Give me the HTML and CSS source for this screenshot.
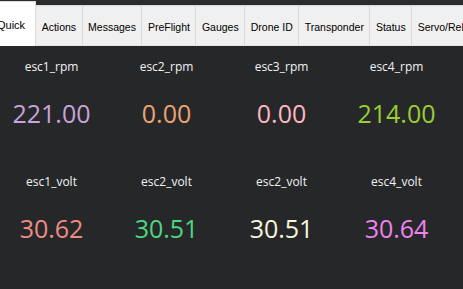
FILE: index.html
```html
<!DOCTYPE html>
<html lang="en">
<head>
    <meta charset="UTF-8">
    <title>Quick</title>
    <link rel="stylesheet" href="styles.css">
</head>
<body>

<div class="tabs">
    <div class="tab active">Quick</div>
    <div class="tab">Actions</div>
    <div class="tab">Messages</div>
    <div class="tab">PreFlight</div>
    <div class="tab">Gauges</div>
    <div class="tab">Drone ID</div>
    <div class="tab">Transponder</div>
    <div class="tab">Status</div>
    <div class="tab">Servo/Relay</div>
</div>

<div class="quick">
    <div class="cell">
        <div class="label">esc1_rpm</div>
        <div class="value c-thistle">221.00</div>
    </div>
    <div class="cell">
        <div class="label">esc2_rpm</div>
        <div class="value c-sandy">0.00</div>
    </div>
    <div class="cell">
        <div class="label">esc3_rpm</div>
        <div class="value c-pink">0.00</div>
    </div>
    <div class="cell">
        <div class="label">esc4_rpm</div>
        <div class="value c-yellowgreen">214.00</div>
    </div>
    <div class="cell">
        <div class="label">esc1_volt</div>
        <div class="value c-salmon">30.62</div>
    </div>
    <div class="cell">
        <div class="label">esc2_volt</div>
        <div class="value c-green">30.51</div>
    </div>
    <div class="cell">
        <div class="label">esc2_volt</div>
        <div class="value c-beige">30.51</div>
    </div>
    <div class="cell">
        <div class="label">esc4_volt</div>
        <div class="value c-violet">30.64</div>
    </div>
</div>

</body>
</html>
```

FILE: styles.css
```css
body {
    margin: 0;
    padding: 0;
    width: 463px;
    height: 289px;
    overflow: hidden;
    background: #262729;
    font-family: 'Open Sans', sans-serif;
}
.tabs {
    display: flex;
    align-items: flex-start;
    height: 46px;
    margin-left: -9px;
    background: #2b2c2e;
    border-bottom: 1px solid #e3e3e3;
    box-sizing: border-box;
    white-space: nowrap;
    font-family: 'Liberation Sans', Arial, sans-serif;
    font-size: 10.5px;
    color: #000;
}
.tab {
    flex: none;
    margin-top: 5px;
    height: 40px;
    line-height: 42px;
    padding: 0 5.5px;
    background: #f0f0f0;
    border-right: 1px solid #d9d9d9;
    border-top: 1px solid #d9d9d9;
    box-sizing: border-box;
}
.tab.active {
    margin-top: 1px;
    height: 45px;
    line-height: 46px;
    padding: 0 10px 0 6px;
    background: #fff;
    font-size: 11px;
}
.quick {
    display: grid;
    grid-template-columns: repeat(4, 115px);
    grid-auto-rows: 115px;
    margin-left: -6px;
    padding-top: 12px;
}
.cell {
    display: flex;
    flex-direction: column;
    align-items: center;
}
.label {
    font-size: 12px;
    line-height: 18px;
    color: #f2f2f2;
}
.value {
    margin-top: 20px;
    font-size: 25px;
    line-height: 34px;
}
.c-thistle { color: #c9a3dc; }
.c-sandy { color: #efa373; }
.c-pink { color: #ffb6c1; }
.c-yellowgreen { color: #9acd32; }
.c-salmon { color: #f08c84; }
.c-green { color: #4ed681; }
.c-beige { color: #f7f5dc; }
.c-violet { color: #ee82ee; }
```
